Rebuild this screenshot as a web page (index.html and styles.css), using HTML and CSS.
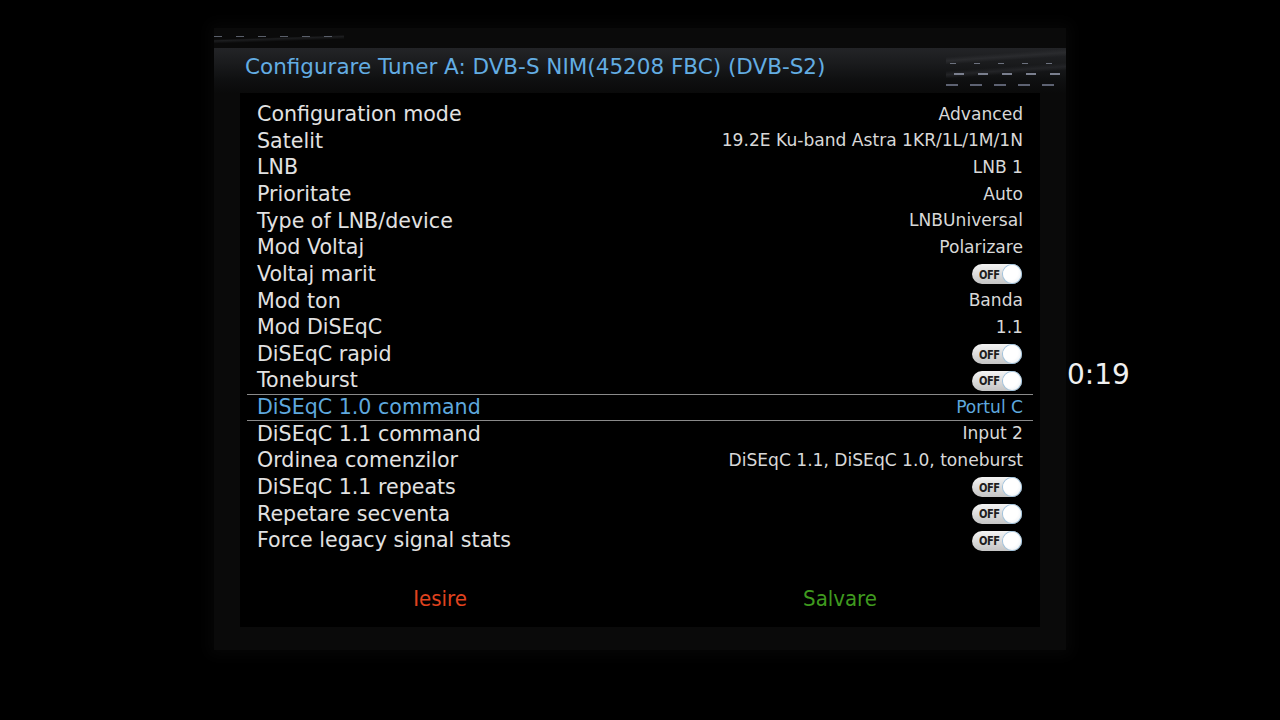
FILE: index.html
```html
<!DOCTYPE html>
<html>
<head>
<meta charset="utf-8">
<link rel="stylesheet" href="styles.css">
</head>
<body>
<div class="screen">
  <div class="window">
    <div class="header">
      <div class="deco deco-left"></div>
      <div class="deco deco-right"></div>
      <div class="titlebar"><span class="title">Configurare Tuner A: DVB-S NIM(45208 FBC) (DVB-S2)</span></div>
    </div>
    <div class="content">
      <div class="list">
        <div class="row"><span class="label">Configuration mode</span><span class="value">Advanced</span></div>
        <div class="row"><span class="label">Satelit</span><span class="value">19.2E Ku-band Astra 1KR/1L/1M/1N</span></div>
        <div class="row"><span class="label">LNB</span><span class="value">LNB 1</span></div>
        <div class="row"><span class="label">Prioritate</span><span class="value">Auto</span></div>
        <div class="row"><span class="label">Type of LNB/device</span><span class="value">LNBUniversal</span></div>
        <div class="row"><span class="label">Mod Voltaj</span><span class="value">Polarizare</span></div>
        <div class="row"><span class="label">Voltaj marit</span><span class="toggle"><span class="off">OFF</span><span class="knob"></span></span></div>
        <div class="row"><span class="label">Mod ton</span><span class="value">Banda</span></div>
        <div class="row"><span class="label">Mod DiSEqC</span><span class="value">1.1</span></div>
        <div class="row"><span class="label">DiSEqC rapid</span><span class="toggle"><span class="off">OFF</span><span class="knob"></span></span></div>
        <div class="row"><span class="label">Toneburst</span><span class="toggle"><span class="off">OFF</span><span class="knob"></span></span></div>
        <div class="row selected"><span class="label">DiSEqC 1.0 command</span><span class="value">Portul C</span></div>
        <div class="row"><span class="label">DiSEqC 1.1 command</span><span class="value">Input 2</span></div>
        <div class="row"><span class="label">Ordinea comenzilor</span><span class="value">DiSEqC 1.1, DiSEqC 1.0, toneburst</span></div>
        <div class="row"><span class="label">DiSEqC 1.1 repeats</span><span class="toggle"><span class="off">OFF</span><span class="knob"></span></span></div>
        <div class="row"><span class="label">Repetare secventa</span><span class="toggle"><span class="off">OFF</span><span class="knob"></span></span></div>
        <div class="row"><span class="label">Force legacy signal stats</span><span class="toggle"><span class="off">OFF</span><span class="knob"></span></span></div>
      </div>
      <div class="buttons">
        <span class="btn exit">Iesire</span>
        <span class="btn save">Salvare</span>
      </div>
    </div>
  </div>
  <div class="timer">0:19</div>
</div>
</body>
</html>
```
FILE: styles.css
```css
html, body {
  margin: 0;
  padding: 0;
  background: #000;
}
body {
  width: 1280px;
  height: 720px;
  overflow: hidden;
  font-family: "DejaVu Sans", Verdana, sans-serif;
}
.screen {
  display: flex;
  align-items: flex-start;
  padding: 28px 0 0 214px;
}
.window {
  width: 852px;
  height: 622px;
  background: #0a0a0a;
  box-shadow: 0 0 14px 6px #060606;
  display: flex;
  flex-direction: column;
}
.header {
  position: relative;
  height: 65px;
  display: flex;
  flex-direction: column;
  justify-content: flex-end;
}
.titlebar {
  height: 45px;
  background: linear-gradient(to bottom, #232427 0%, #1b1c1e 30%, #0f1011 70%, #0a0a0a 100%);
  display: flex;
  align-items: center;
  padding-left: 31px;
}
.title {
  color: #63ade3;
  font-size: 21.5px;
  line-height: 1;
  margin-top: -8px;
}
.deco {
  position: absolute;
  pointer-events: none;
}
.deco-left {
  left: 0;
  top: 0;
  width: 130px;
  height: 24px;
  background:
    repeating-linear-gradient(90deg, #5a5f6a 0 8px, transparent 8px 22px) 0 8px / 120px 1px no-repeat,
    linear-gradient(178deg, transparent 40%, #1d1e20 45%, transparent 55%);
}
.deco-right {
  right: 0;
  top: 10px;
  width: 120px;
  height: 55px;
  z-index: 1;
  background:
    repeating-linear-gradient(90deg, #7a7f8e 0 10px, transparent 10px 24px) 8px 35px / 110px 2px no-repeat,
    repeating-linear-gradient(90deg, #5d6272 0 12px, transparent 12px 24px) 0 46px / 120px 2px no-repeat,
    repeating-linear-gradient(90deg, #6c717e 0 6px, transparent 6px 24px) 4px 25px / 110px 1px no-repeat,
    linear-gradient(176deg, transparent 30%, #2a2b2e 36%, transparent 42%, transparent 52%, #232427 58%, transparent 64%);
}
.content {
  margin: 0 26px;
  height: 534px;
  background: #000;
  display: flex;
  flex-direction: column;
}
.list {
  margin: 8px 7px 0 7px;
  display: flex;
  flex-direction: column;
}
.row {
  height: 26.65px;
  box-sizing: border-box;
  display: flex;
  align-items: center;
  justify-content: space-between;
  padding: 0 10px;
}
.label {
  color: #e2e2e2;
  font-size: 20.6px;
  line-height: 1;
}
.value {
  color: #d8d8d8;
  font-size: 17.1px;
  line-height: 1;
}
.row.selected {
  border-top: 1px solid #8a8a8a;
  border-bottom: 1px solid #8a8a8a;
}
.row.selected .label,
.row.selected .value {
  color: #5ea8de;
}
.toggle {
  width: 50px;
  height: 20px;
  border-radius: 10px;
  background: linear-gradient(to bottom, #f4f4f4, #c4c4c4);
  display: flex;
  align-items: center;
  justify-content: space-between;
  box-sizing: border-box;
  padding-left: 7px;
  margin-right: 1px;
}
.off {
  font-family: "DejaVu Sans Condensed", "DejaVu Sans", sans-serif;
  font-weight: bold;
  font-size: 13px;
  color: #1e1e1e;
  letter-spacing: -0.6px;
  transform: scaleX(0.85);
  transform-origin: left center;
}
.knob {
  width: 18px;
  height: 18px;
  border-radius: 50%;
  background: radial-gradient(circle at 40% 40%, #ffffff 50%, #e4ecf2 100%);
  box-shadow: 0 0 0 1px #9fc3de;
  margin-right: 1px;
}
.buttons {
  margin-top: auto;
  margin-bottom: 16px;
  display: grid;
  grid-template-columns: 1fr 1fr;
}
.btn {
  text-align: center;
  font-family: "DejaVu Sans Condensed", "DejaVu Sans", sans-serif;
  font-size: 22px;
}
.exit { color: #e0431f; }
.save { color: #3f9a1f; }
.timer {
  margin: 330px 0 0 1px;
  color: #f0f0f0;
  font-size: 28px;
}
```
